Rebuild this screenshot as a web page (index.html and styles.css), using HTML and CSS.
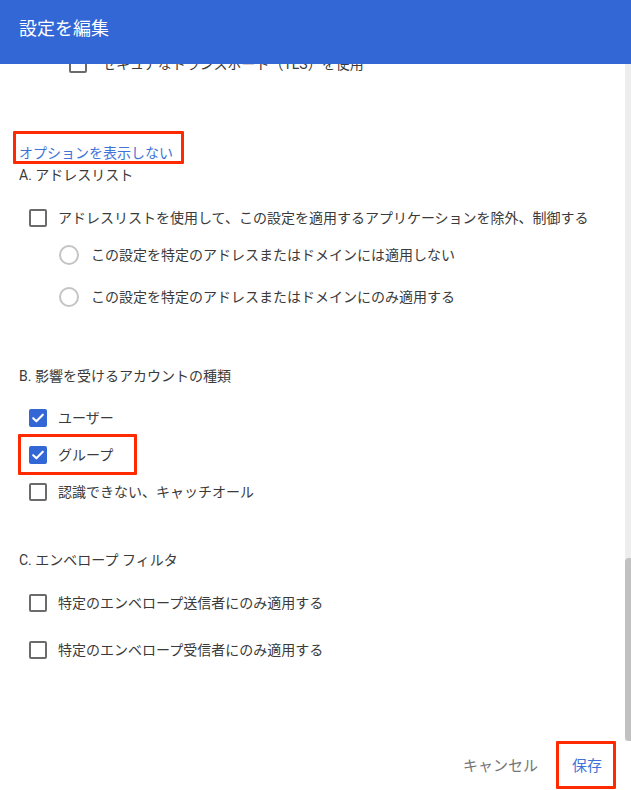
FILE: index.html
```html
<!DOCTYPE html>
<html lang="ja">
<head>
<meta charset="utf-8">
<title>設定を編集</title>
<link rel="stylesheet" href="styles.css">
</head>
<body>
<div class="dialog">
  <header class="title-bar">設定を編集</header>
  <div class="body">
    <div class="content">
      <div class="row row-partial">
        <span class="cb"></span><span class="label">セキュアなトランスポート（TLS）を使用</span>
      </div>
      <div class="link-line"><span class="link mark mark-link">オプションを表示しない</span></div>
      <div class="section-title sec-a">A. アドレスリスト</div>
      <div class="row row-cb1">
        <span class="cb"></span><span class="label">アドレスリストを使用して、この設定を適用するアプリケーションを除外、制御する</span>
      </div>
      <div class="row row-r1 indent">
        <span class="radio"></span><span class="label">この設定を特定のアドレスまたはドメインには適用しない</span>
      </div>
      <div class="row row-r2 indent">
        <span class="radio"></span><span class="label">この設定を特定のアドレスまたはドメインにのみ適用する</span>
      </div>
      <div class="section-title sec-b">B. 影響を受けるアカウントの種類</div>
      <div class="row row-user">
        <span class="cb checked"><svg viewBox="0 0 18 18" width="18" height="18"><path d="M4.2 9.2l3.2 3.1 6.4-6.6" fill="none" stroke="#fff" stroke-width="2.1" stroke-linecap="round" stroke-linejoin="round"/></svg></span><span class="label">ユーザー</span>
      </div>
      <div class="row row-group">
        <span class="mark mark-group"><span class="cb checked"><svg viewBox="0 0 18 18" width="18" height="18"><path d="M4.2 9.2l3.2 3.1 6.4-6.6" fill="none" stroke="#fff" stroke-width="2.1" stroke-linecap="round" stroke-linejoin="round"/></svg></span><span class="label">グループ</span></span>
      </div>
      <div class="row row-nin">
        <span class="cb"></span><span class="label">認識できない、キャッチオール</span>
      </div>
      <div class="section-title sec-c">C. エンベロープ フィルタ</div>
      <div class="row row-s">
        <span class="cb"></span><span class="label">特定のエンベロープ送信者にのみ適用する</span>
      </div>
      <div class="row row-r">
        <span class="cb"></span><span class="label">特定のエンベロープ受信者にのみ適用する</span>
      </div>
    </div>
    <div class="scrollbar"><div class="thumb"></div></div>
  </div>
  <footer class="actions">
    <span class="btn btn-cancel">キャンセル</span>
    <span class="btn btn-save mark mark-save">保存</span>
  </footer>
</div>
</body>
</html>
```

FILE: styles.css
```css
* { box-sizing: border-box; }
html, body { margin: 0; padding: 0; background: #fff; }
body {
  font-family: Roboto, "Noto Sans CJK JP", "Noto Sans", sans-serif;
  color: #3a3a3a;
  font-size: 14px;
}
.dialog {
  width: 631px;
  height: 790px;
  display: flex;
  flex-direction: column;
  overflow: hidden;
}
.title-bar {
  height: 64px;
  flex: none;
  background: #3367d6;
  color: #fff;
  font-size: 18px;
  padding: 16px 0 0 19px;
  line-height: 26px;
  position: relative;
  z-index: 2;
}
.body {
  height: 677px;
  flex: none;
  display: flex;
  overflow: hidden;
}
.content {
  flex: 1;
  padding-left: 19px;
}
.scrollbar {
  width: 6px;
  flex: none;
  background: #ededed;
  padding-top: 494px;
}
.thumb {
  height: 183px;
  background: #c1c1c1;
  border-radius: 4px 0 0 4px;
}
.row {
  display: flex;
  align-items: center;
  height: 36px;
  padding-left: 10px;
}
.row .label { margin-left: 11px; line-height: 20px; white-space: nowrap; }
.indent { padding-left: 40px; }
.indent .label { margin-left: 12px; }
.row-partial { margin-top: -18px; padding-left: 50px; }
.row-partial .label { margin-left: 15px; }
.cb {
  width: 18px;
  height: 18px;
  flex: none;
  border: 2px solid #6b6b6b;
  border-radius: 2px;
  display: inline-block;
}
.cb.checked {
  border: none;
  background: #3367d6;
  border-radius: 2px;
}
.cb svg { display: block; }
.radio {
  width: 20px;
  height: 20px;
  flex: none;
  border: 2px solid #c4c4c4;
  border-radius: 50%;
  display: inline-block;
}
.link-line { margin-top: 61px; line-height: 20px; height: 20px; }
.link { color: #3f73d8; }
.section-title { line-height: 20px; height: 20px; color: #3a3a3a; }
.sec-a { margin-top: 2px; }
.row-cb1 { margin-top: 15px; }
.row-r1 { height: 38px; }
.row-r2 { height: 46px; }
.sec-b { margin-top: 46px; }
.row-user { margin-top: 14px; }
.row-group { height: 38px; }
.sec-c { margin-top: 40px; }
.row-s { margin-top: 15px; }
.row-r { margin-top: 11px; }
.mark-group { display: inline-flex; align-items: center; }
.mark { position: relative; }
.mark::after {
  content: "";
  position: absolute;
  border: 3px solid #ff2a00;
  border-radius: 1px;
  pointer-events: none;
}
.mark-link::after { left: -6px; right: -11px; top: -14px; bottom: -3px; }
.mark-group::after { left: -11px; right: -24px; top: -11px; bottom: -10px; }
.mark-save::after { left: -16px; right: -14px; top: -15px; bottom: -13px; }
.actions {
  flex: 1;
  display: flex;
  justify-content: flex-end;
  align-items: center;
  padding: 0 29px 0 0;
  gap: 34px;
  font-size: 15px;
}
.btn { line-height: 20px; }
.btn-cancel { color: #757575; }
.btn-save { color: #3f73d8; }
```
